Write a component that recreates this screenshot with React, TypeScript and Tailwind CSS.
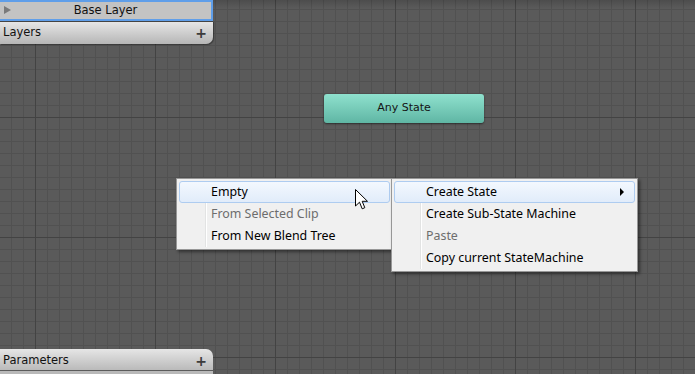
import React from "react";

const gridBg =
  "[background-image:linear-gradient(to_right,#434343_1px,transparent_1px),linear-gradient(to_bottom,#434343_1px,transparent_1px),linear-gradient(to_right,#515151_1px,transparent_1px),linear-gradient(to_bottom,#515151_1px,transparent_1px)] [background-size:120px_120px,120px_120px,12px_12px,12px_12px] [background-position:35px_0,0_117px,11px_0,0_9px]";

const uiFont = "font-['DejaVu_Sans',sans-serif]";
const menuFont = "font-['Noto_Sans','Liberation_Sans',sans-serif]";

type Item = { label: string; disabled?: boolean; active?: boolean; sub?: boolean };

function Menu({ items, className }: { items: Item[]; className: string }) {
  return (
    <div
      className={`absolute bg-[#f0f0f0] border border-[#979797] px-[2px] py-[2px] shadow-[2px_2px_3px_rgba(0,0,0,0.45)] ${menuFont} ${className}`}
    >
      {/* gutter line */}
      <div className="absolute top-[2px] bottom-[2px] left-[28px] w-[2px] border-l border-[#e2e3e3] after:absolute after:left-0 after:top-0 after:bottom-0 after:w-px after:bg-white" />
      {items.map((it) => (
        <div
          key={it.label}
          className={`relative flex items-center h-[22px] pl-[31px] pr-[10px] text-[12.4px] rounded-[3px] border ${
            it.active
              ? "border-[#aeccf0] bg-gradient-to-b from-[#f3f8fe] to-[#e1ecfa]"
              : "border-transparent"
          } ${it.disabled ? "text-[#6d6d6d]" : "text-black"}`}
        >
          <span className="flex-1 whitespace-nowrap">{it.label}</span>
          {it.sub && (
            <span className="w-0 h-0 border-y-[4px] border-y-transparent border-l-[4px] border-l-black" />
          )}
        </div>
      ))}
    </div>
  );
}

export default function App() {
  return (
    <div
      className={`relative w-[695px] h-[374px] overflow-hidden bg-[#5a5a5a] ${gridBg} flex flex-col justify-between`}
    >
      {/* top shade */}
      <div className="absolute inset-x-0 top-0 h-[8px] bg-gradient-to-b from-black/15 to-transparent" />

      {/* Layers panel */}
      <div className={`relative w-[213px] ${uiFont}`}>
        <div className="relative flex items-center h-[21px] bg-[#c3c3c3] border-2 border-l-0 border-[#5f9ee9] text-[11.5px] text-[#111]">
          <span className="absolute left-[4px] top-[4px] w-0 h-0 border-y-[4px] border-y-transparent border-l-[7px] border-l-[#7a7a7a]" />
          <span className="flex-1 text-center">Base Layer</span>
        </div>
        <div className="flex items-center h-[23px] pl-[3px] pr-[6px] rounded-br-[7px] border-t border-[#444] bg-gradient-to-b from-[#e6e6e6] to-[#b6b6b6] text-[11.5px] text-[#111] shadow-[1px_1px_1px_rgba(0,0,0,0.35)]">
          <span className="flex-1">Layers</span>
          <span className="text-[14px] font-bold text-[#3c3c3c] leading-none">+</span>
        </div>
      </div>

      {/* Parameters panel */}
      <div className={`relative w-[213px] ${uiFont}`}>
        <div className="flex items-center h-[21px] pl-[3px] pr-[6px] pt-[2px] rounded-tr-[7px] bg-gradient-to-b from-[#e6e6e6] to-[#bababa] text-[11.5px] text-[#111]">
          <span className="flex-1">Parameters</span>
          <span className="text-[14px] font-bold text-[#3c3c3c] leading-none">+</span>
        </div>
        <div className="h-[4px] border-t border-[#5c5c5c] bg-[#b9b9b9]" />
      </div>

      {/* Any State node */}
      <div
        className={`absolute left-[324px] top-[94px] w-[160px] h-[29px] rounded-[3px] bg-gradient-to-b from-[#8fe1ce] to-[#5fb6a4] shadow-[0_1px_2px_rgba(0,0,0,0.5)] flex items-center justify-center text-[11px] text-[#141414] ${uiFont}`}
      >
        Any State
      </div>

      <Menu
        className="left-[176px] top-[178px] w-[217px]"
        items={[
          { label: "Empty", active: true },
          { label: "From Selected Clip", disabled: true },
          { label: "From New Blend Tree" },
        ]}
      />
      <Menu
        className="left-[391px] top-[178px] w-[247px]"
        items={[
          { label: "Create State", active: true, sub: true },
          { label: "Create Sub-State Machine" },
          { label: "Paste", disabled: true },
          { label: "Copy current StateMachine" },
        ]}
      />

      {/* mouse cursor */}
      <svg className="absolute left-[355px] top-[189px]" width="14" height="22" viewBox="0 0 14 22">
        <path
          d="M0.5 0.5 L0.5 17 L4.5 13.2 L7.2 19.8 L9.8 18.7 L7.2 12.3 L12.5 12.3 Z"
          fill="#fff"
          stroke="#000"
          strokeWidth="1"
          strokeLinejoin="round"
        />
      </svg>
    </div>
  );
}
